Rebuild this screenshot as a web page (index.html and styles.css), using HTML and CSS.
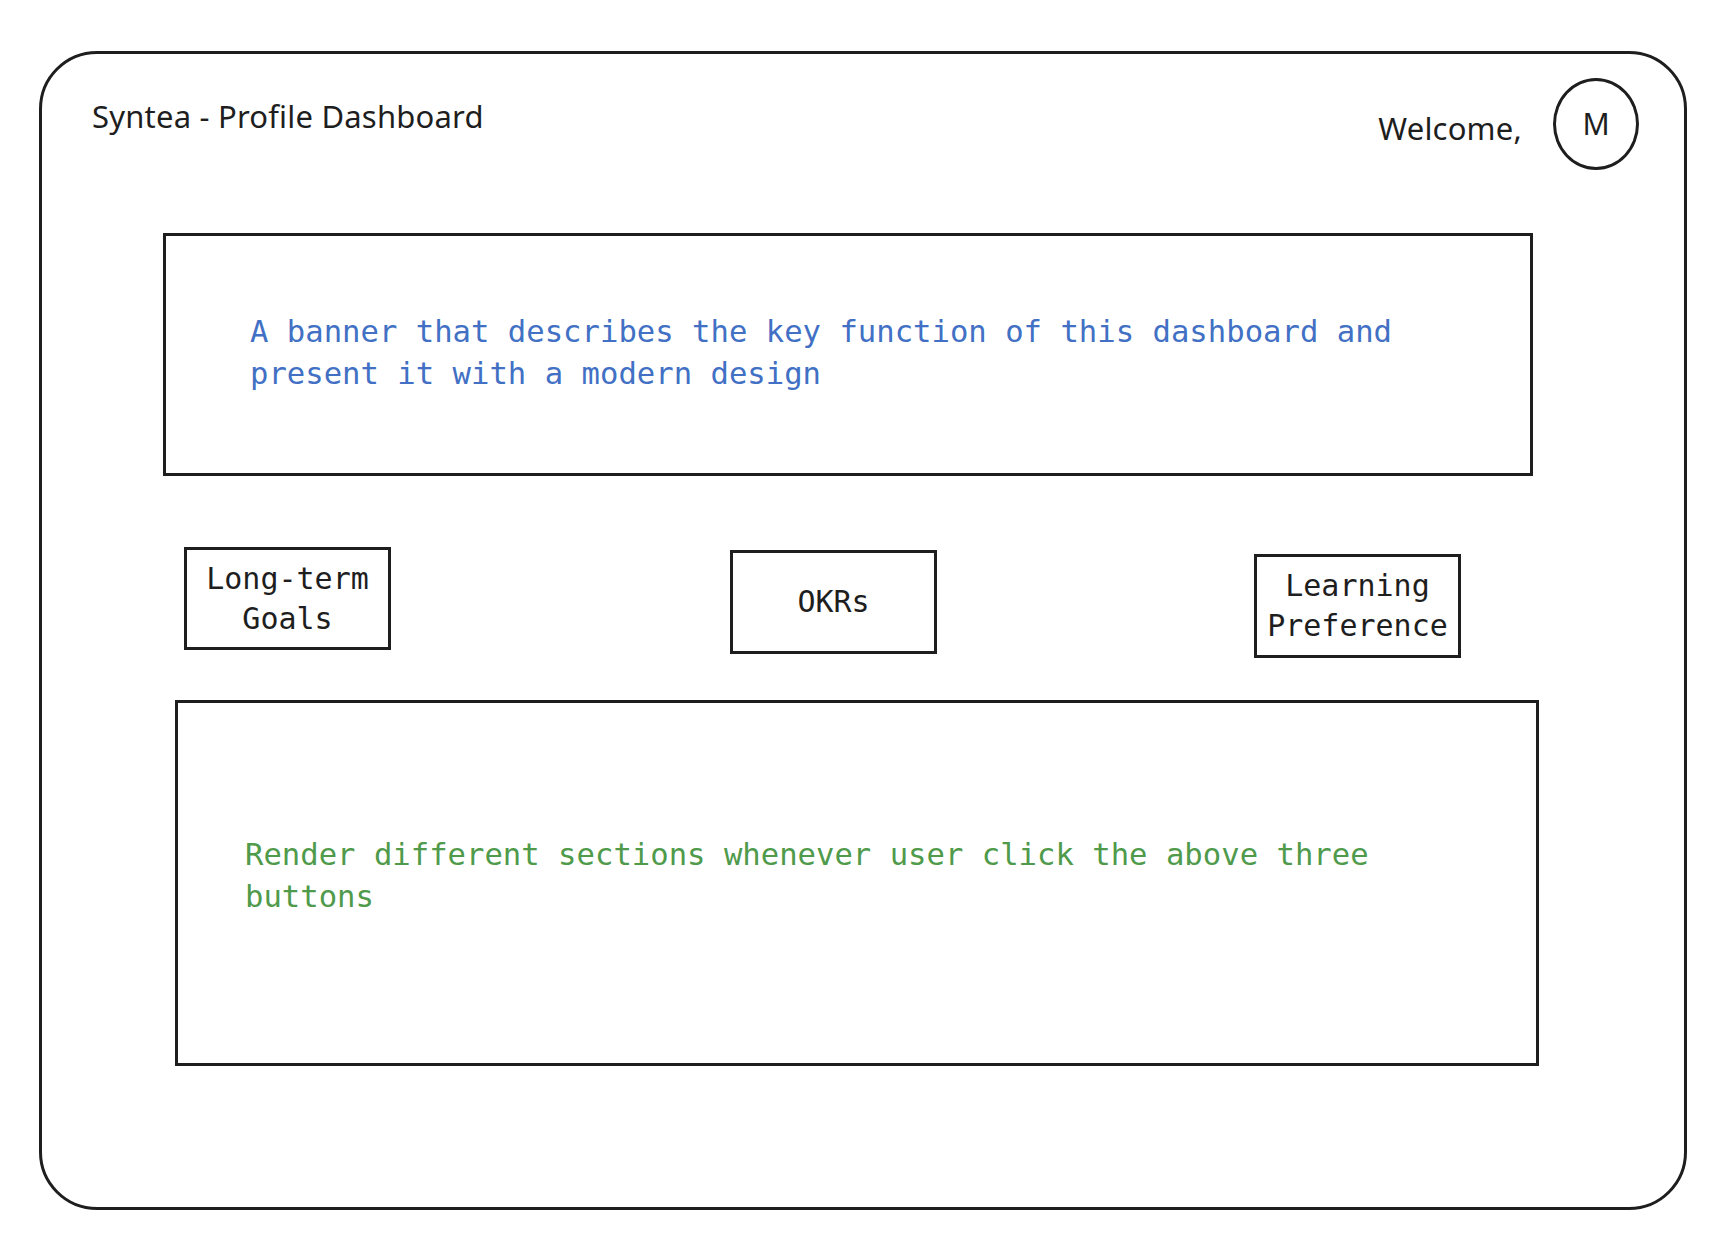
FILE: index.html
```html
<!DOCTYPE html>
<html lang="en">
<head>
<meta charset="utf-8">
<title>Syntea - Profile Dashboard</title>
<link rel="stylesheet" href="styles.css">
</head>
<body>
  <div class="frame">
    <header class="header">
      <h1 class="title">Syntea - Profile Dashboard</h1>
      <div class="user">
        <span class="welcome">Welcome,</span>
        <div class="avatar">M</div>
      </div>
    </header>

    <section class="banner">
      <p class="note note-blue">A banner that describes the key function of this dashboard and present it with a modern design</p>
    </section>

    <nav class="tabs">
      <button class="tab tab-1">Long-term Goals</button>
      <button class="tab tab-2">OKRs</button>
      <button class="tab tab-3">Learning Preference</button>
    </nav>

    <section class="content">
      <p class="note note-green">Render different sections whenever user click the above three buttons</p>
    </section>
  </div>
</body>
</html>
```

FILE: styles.css
```css
* {
  box-sizing: border-box;
}

html, body {
  margin: 0;
  padding: 0;
  background: #ffffff;
}

body {
  padding: 51px 0 0 39px;
  font-family: "Noto Sans", Lato, sans-serif;
  color: #1e1e1e;
}

.frame {
  width: 1648px;
  height: 1159px;
  border: 3px solid #1e1e1e;
  border-radius: 58px;
  display: flex;
  flex-direction: column;
  align-items: flex-start;
}

.header {
  width: 100%;
  display: flex;
  justify-content: space-between;
  align-items: flex-start;
  padding: 24px 45px 0 50px;
}

.title {
  margin: 20px 0 0 0;
  font-size: 31px;
  letter-spacing: 0.2px;
  line-height: 36px;
  font-weight: 400;
}

.user {
  display: flex;
  align-items: flex-start;
  gap: 31px;
}

.welcome {
  margin-top: 32px;
  font-size: 31px;
  letter-spacing: 0.2px;
  line-height: 36px;
}

.avatar {
  width: 86px;
  height: 92px;
  border: 3px solid #1e1e1e;
  border-radius: 50%;
  display: flex;
  align-items: center;
  justify-content: center;
  font-size: 30px;
  line-height: 36px;
}

.note {
  margin: 0;
  max-width: 1200px;
  font-family: "DejaVu Sans Mono", "Liberation Mono", monospace;
  font-size: 30.6px;
  line-height: 42px;
}

.note-blue {
  color: #4170c4;
}

.note-green {
  color: #4f9a4b;
}

.banner {
  margin: 63px 0 0 121px;
  width: 1370px;
  height: 243px;
  border: 3px solid #1e1e1e;
  padding: 75px 80px 0 84px;
}

.tabs {
  margin: 71px 0 0 142px;
  width: 1277px;
  display: flex;
  justify-content: space-between;
  align-items: flex-start;
}

.tab {
  width: 207px;
  height: 104px;
  border: 3px solid #1e1e1e;
  background: #ffffff;
  padding: 0 6px;
  display: flex;
  align-items: center;
  justify-content: center;
  text-align: center;
  font-family: "DejaVu Sans Mono", "Liberation Mono", monospace;
  font-size: 30px;
  line-height: 40px;
  color: #1e1e1e;
}

.tab-1 {
  height: 103px;
}

.tab-2 {
  margin-top: 3px;
  margin-left: 22px;
}

.tab-3 {
  margin-top: 7px;
}

.content {
  margin: 42px 0 0 133px;
  width: 1364px;
  height: 366px;
  border: 3px solid #1e1e1e;
  padding: 131px 80px 0 67px;
}
```
